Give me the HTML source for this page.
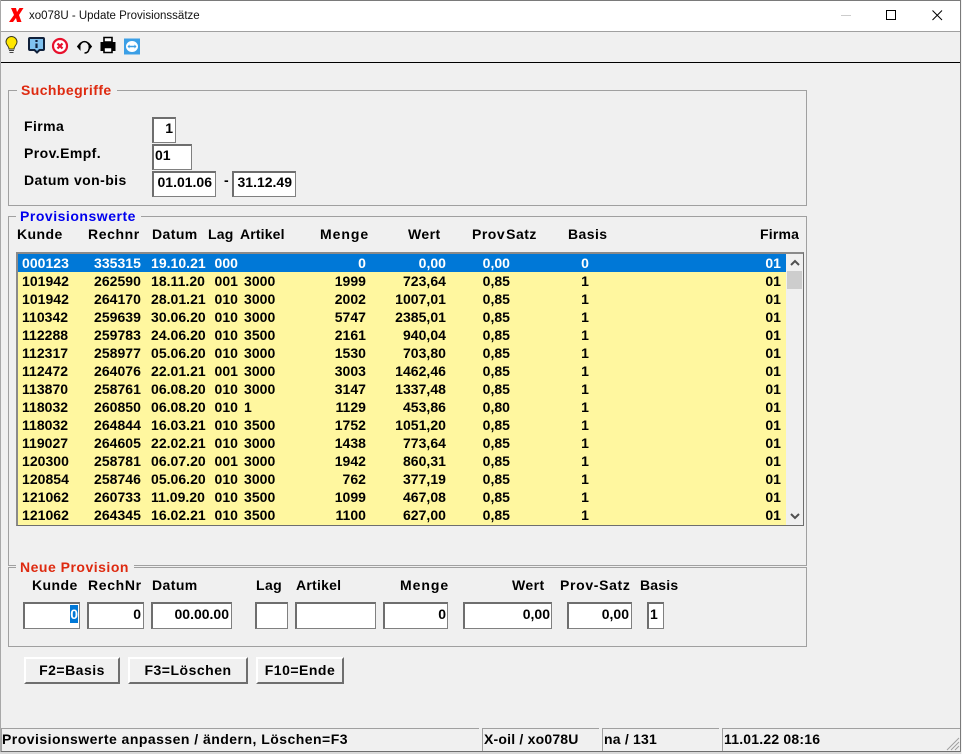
<!DOCTYPE html>
<html><head><meta charset="utf-8">
<style>
html,body{margin:0;padding:0;width:962px;height:754px;overflow:hidden;background:#f0f0f0}
*{box-sizing:border-box}
body{position:relative;font:bold 14px/16px "Liberation Sans",sans-serif;color:#000;letter-spacing:.42px}
.a{position:absolute;white-space:nowrap}
.gb{position:absolute;border:1px solid #a0a0a0}
.lg{position:absolute;background:#f0f0f0;padding:0 5px 0 4px;white-space:nowrap;height:16px}
.in{position:absolute;background:#fff;border-style:solid;border-width:2px 1px 1px 2px;border-color:#6e6e6e #808080 #808080 #6e6e6e;white-space:nowrap;line-height:20px;padding:0 2px 0 2px;height:27px;text-align:right;letter-spacing:0}
.in.l{text-align:left;padding-left:1px}
.btn{position:absolute;top:657px;height:27px;background:#f0f0f0;border:2px solid;border-color:#fff #6e6e6e #6e6e6e #fff;text-align:center;line-height:23px;letter-spacing:.5px}
.row{position:absolute;left:0;width:768px;height:18px;line-height:18px;background:#fff79f;letter-spacing:.03px}
.row.s{background:#0078d7;color:#fff}
.row span{position:absolute;top:0;white-space:nowrap}
.c1{left:4px}.c2{left:76px}.c3{left:133px}.c4{left:196.500px}.c5{left:226px}
.c6{right:420px}.c7{right:340px}.c8{right:276px}.c9{right:197px}.c10{right:5px}
.st{position:absolute;top:728px;height:23px;border-top:1px solid #a0a0a0;border-left:1px solid #a0a0a0;line-height:20px;padding-left:1px;white-space:nowrap;letter-spacing:.2px}
</style></head><body>

<div class="a" style="left:0;top:0;width:961px;height:32px;background:#fff;border-top:1px solid #7a7a7a"></div>
<div class="a" style="left:0;top:31px;width:961px;height:1px;background:#a0a0a0"></div>
<svg class="a" style="left:9px;top:7px" width="15" height="16" viewBox="0 0 15 16"><path d="M2 1H7L8 5 10.500 1H14.500L10 8 12.500 15H8L7 11 4 15H0L5 8Z" fill="#f00"/></svg>
<div class="a" style="left:29px;top:8px;font:11.500px/16px 'Liberation Sans',sans-serif;color:#111;letter-spacing:0">xo078U - Update Provisionssätze</div>
<svg class="a" style="left:830px;top:0" width="132" height="31"><path d="M11 15.500H21" stroke="#ccc"/><rect x="56.500" y="10.500" width="9" height="9" fill="none" stroke="#000"/><path d="M102.500 10.500L112 20M112 10.500L102.500 20" stroke="#000" fill="none"/></svg>

<svg class="a" style="left:0;top:32px" width="150" height="30" viewBox="0 0 150 30">
<path d="M9 17C9 14 6 13 6 10A5.500 5.500 0 0 1 17 10C17 13 14 14 14 17Z" fill="#ffe600" stroke="#3a3a20" stroke-width="1"/><path d="M9 18.500H14M9.500 20.500H13.500" stroke="#444" stroke-width="1"/>
<path d="M30 6H43Q44 6 44 7V17Q44 18 43 18H39.500L37 20.500 34.500 18H30Q29 18 29 17V7Q29 6 30 6Z" fill="#7fc1ee" stroke="#10203a" stroke-width="2"/><path d="M36.500 8V10M36.500 11.500V16" stroke="#10203a" stroke-width="2.200"/>
<circle cx="60" cy="14" r="7" fill="#fff" stroke="#e8112d" stroke-width="2.200"/><path d="M57.500 11.500L62.500 16.500M62.500 11.500L57.500 16.500" stroke="#e8112d" stroke-width="2.200"/>
<path d="M80 13A5 6 0 0 1 89 13" fill="none" stroke="#000" stroke-width="1.500"/><path d="M80 11.500L77.500 14.500 80 17.500ZM89 11.500L91.500 14.500 89 17.500Z" fill="#000" stroke="#000"/><path d="M89 17Q88.500 21 84.500 21" fill="none" stroke="#000" stroke-width="1.500"/>
<path d="M104 5.500H112V10H104Z" fill="#fff" stroke="#000" stroke-width="1.600"/><path d="M101 10.500H115V18.500H112V15H104V18.500H101Z" fill="#000" stroke="#000"/><path d="M104 15.500H112V20.500H104Z" fill="#fff" stroke="#000" stroke-width="1.600"/>
<rect x="124" y="6.500" width="16" height="16" fill="#3b9fe6"/><ellipse cx="132" cy="14.500" rx="6" ry="5.500" fill="#fff"/><path d="M129.500 14.500H134.500" stroke="#3b9fe6" stroke-width="1.500"/><path d="M129.500 12.500L127.500 14.500 129.500 16.500ZM134.500 12.500L136.500 14.500 134.500 16.500Z" fill="#3b9fe6"/>
</svg>
<div class="a" style="left:0;top:62px;width:961px;height:1px;background:#000"></div>

<div class="gb" style="left:8px;top:90px;width:799px;height:116px"></div>
<div class="lg" style="left:17px;top:82px;color:#de2a10">Suchbegriffe</div>
<div class="a" style="left:24px;top:118px">Firma</div>
<div class="a" style="left:24px;top:145px">Prov.Empf.</div>
<div class="a" style="left:24px;top:172px">Datum von-bis</div>
<div class="in" style="left:152px;top:117px;width:24px;height:26px;line-height:19px">1</div>
<div class="in l" style="left:152px;top:144px;width:40px;height:26px;line-height:19px">01</div>
<div class="in" style="left:152px;top:171px;width:64px;height:26px;line-height:18px;padding-right:3px">01.01.06</div>
<div class="a" style="left:224px;top:172px">-</div>
<div class="in" style="left:232px;top:171px;width:64px;height:26px;line-height:18px;padding-right:3px">31.12.49</div>

<div class="gb" style="left:8px;top:216px;width:799px;height:350px"></div>
<div class="lg" style="left:16px;top:208px;color:#0000ee;letter-spacing:.52px">Provisionswerte</div>
<div class="a" style="left:17px;top:226px">Kunde</div>
<div class="a" style="left:88px;top:226px;letter-spacing:.6px">Rechnr</div>
<div class="a" style="left:152px;top:226px">Datum</div>
<div class="a" style="left:208px;top:226px;letter-spacing:.2px">Lag</div>
<div class="a" style="left:240px;top:226px;letter-spacing:.15px">Artikel</div>
<div class="a" style="left:320px;top:226px;letter-spacing:.95px">Menge</div>
<div class="a" style="left:408px;top:226px">Wert</div>
<div class="a" style="left:472px;top:226px;letter-spacing:.5px">Prov<span style="margin-left:1px">Satz</span></div>
<div class="a" style="left:568px;top:226px">Basis</div>
<div class="a" style="left:760px;top:226px;letter-spacing:.2px">Firma</div>

<div class="a" style="left:16px;top:252px;width:788px;height:274px;background:#fff;border:2px solid #8a8a8a;border-right:1px solid #6e6e6e;border-bottom:1px solid #6e6e6e">
<div class="row s" style="top:0"><span class="c1">000123</span><span class="c2">335315</span><span class="c3">19.10.21</span><span class="c4">000</span><span class="c6">0</span><span class="c7">0,00</span><span class="c8">0,00</span><span class="c9">0</span><span class="c10">01</span></div>
<div class="row" style="top:18px"><span class="c1">101942</span><span class="c2">262590</span><span class="c3">18.11.20</span><span class="c4">001</span><span class="c5">3000</span><span class="c6">1999</span><span class="c7">723,64</span><span class="c8">0,85</span><span class="c9">1</span><span class="c10">01</span></div>
<div class="row" style="top:36px"><span class="c1">101942</span><span class="c2">264170</span><span class="c3">28.01.21</span><span class="c4">010</span><span class="c5">3000</span><span class="c6">2002</span><span class="c7">1007,01</span><span class="c8">0,85</span><span class="c9">1</span><span class="c10">01</span></div>
<div class="row" style="top:54px"><span class="c1">110342</span><span class="c2">259639</span><span class="c3">30.06.20</span><span class="c4">010</span><span class="c5">3000</span><span class="c6">5747</span><span class="c7">2385,01</span><span class="c8">0,85</span><span class="c9">1</span><span class="c10">01</span></div>
<div class="row" style="top:72px"><span class="c1">112288</span><span class="c2">259783</span><span class="c3">24.06.20</span><span class="c4">010</span><span class="c5">3500</span><span class="c6">2161</span><span class="c7">940,04</span><span class="c8">0,85</span><span class="c9">1</span><span class="c10">01</span></div>
<div class="row" style="top:90px"><span class="c1">112317</span><span class="c2">258977</span><span class="c3">05.06.20</span><span class="c4">010</span><span class="c5">3000</span><span class="c6">1530</span><span class="c7">703,80</span><span class="c8">0,85</span><span class="c9">1</span><span class="c10">01</span></div>
<div class="row" style="top:108px"><span class="c1">112472</span><span class="c2">264076</span><span class="c3">22.01.21</span><span class="c4">001</span><span class="c5">3000</span><span class="c6">3003</span><span class="c7">1462,46</span><span class="c8">0,85</span><span class="c9">1</span><span class="c10">01</span></div>
<div class="row" style="top:126px"><span class="c1">113870</span><span class="c2">258761</span><span class="c3">06.08.20</span><span class="c4">010</span><span class="c5">3000</span><span class="c6">3147</span><span class="c7">1337,48</span><span class="c8">0,85</span><span class="c9">1</span><span class="c10">01</span></div>
<div class="row" style="top:144px"><span class="c1">118032</span><span class="c2">260850</span><span class="c3">06.08.20</span><span class="c4">010</span><span class="c5">1</span><span class="c6">1129</span><span class="c7">453,86</span><span class="c8">0,80</span><span class="c9">1</span><span class="c10">01</span></div>
<div class="row" style="top:162px"><span class="c1">118032</span><span class="c2">264844</span><span class="c3">16.03.21</span><span class="c4">010</span><span class="c5">3500</span><span class="c6">1752</span><span class="c7">1051,20</span><span class="c8">0,85</span><span class="c9">1</span><span class="c10">01</span></div>
<div class="row" style="top:180px"><span class="c1">119027</span><span class="c2">264605</span><span class="c3">22.02.21</span><span class="c4">010</span><span class="c5">3000</span><span class="c6">1438</span><span class="c7">773,64</span><span class="c8">0,85</span><span class="c9">1</span><span class="c10">01</span></div>
<div class="row" style="top:198px"><span class="c1">120300</span><span class="c2">258781</span><span class="c3">06.07.20</span><span class="c4">001</span><span class="c5">3000</span><span class="c6">1942</span><span class="c7">860,31</span><span class="c8">0,85</span><span class="c9">1</span><span class="c10">01</span></div>
<div class="row" style="top:216px"><span class="c1">120854</span><span class="c2">258746</span><span class="c3">05.06.20</span><span class="c4">010</span><span class="c5">3000</span><span class="c6">762</span><span class="c7">377,19</span><span class="c8">0,85</span><span class="c9">1</span><span class="c10">01</span></div>
<div class="row" style="top:234px"><span class="c1">121062</span><span class="c2">260733</span><span class="c3">11.09.20</span><span class="c4">010</span><span class="c5">3500</span><span class="c6">1099</span><span class="c7">467,08</span><span class="c8">0,85</span><span class="c9">1</span><span class="c10">01</span></div>
<div class="row" style="top:252px;height:19px"><span class="c1">121062</span><span class="c2">264345</span><span class="c3">16.02.21</span><span class="c4">010</span><span class="c5">3500</span><span class="c6">1100</span><span class="c7">627,00</span><span class="c8">0,85</span><span class="c9">1</span><span class="c10">01</span></div>
</div>
<div class="a" style="left:786px;top:254px;width:17px;height:271px;background:#f0f0f0"></div>
<div class="a" style="left:787px;top:271px;width:15px;height:18px;background:#cdcdcd"></div>
<svg class="a" style="left:787px;top:254px" width="16" height="271"><path d="M4 11L8 7 12 11M4 260L8 264 12 260" fill="none" stroke="#505050" stroke-width="2"/></svg>

<div class="gb" style="left:8px;top:567px;width:799px;height:80px"></div>
<div class="lg" style="left:16px;top:559px;color:#de2a10;letter-spacing:.5px">Neue Provision</div>
<div class="a" style="left:32px;top:577px">Kunde</div>
<div class="a" style="left:88px;top:577px;letter-spacing:.65px">RechNr</div>
<div class="a" style="left:152px;top:577px">Datum</div>
<div class="a" style="left:256px;top:577px">Lag</div>
<div class="a" style="left:296px;top:577px;letter-spacing:.25px">Artikel</div>
<div class="a" style="left:400px;top:577px;letter-spacing:.95px">Menge</div>
<div class="a" style="left:512px;top:577px">Wert</div>
<div class="a" style="left:560px;top:577px;letter-spacing:.66px">Prov-Satz</div>
<div class="a" style="left:640px;top:577px;letter-spacing:.2px">Basis</div>

<div class="in" style="left:23px;top:602px;width:57px;padding-right:1px"><span style="background:#0078d7;color:#fff;display:inline-block;height:18px;line-height:18px">0</span></div>
<div class="in" style="left:87px;top:602px;width:57px">0</div>
<div class="in" style="left:151px;top:602px;width:81px">00.00.00</div>
<div class="in" style="left:255px;top:602px;width:33px"></div>
<div class="in" style="left:295px;top:602px;width:81px"></div>
<div class="in" style="left:383px;top:602px;width:65px;padding-right:1px">0</div>
<div class="in" style="left:463px;top:602px;width:89px;padding-right:1px">0,00</div>
<div class="in" style="left:567px;top:602px;width:65px">0,00</div>
<div class="in l" style="left:647px;top:602px;width:17px">1</div>

<div class="btn" style="left:24px;width:96px">F2=Basis</div>
<div class="btn" style="left:128px;width:120px">F3=Löschen</div>
<div class="btn" style="left:256px;width:88px">F10=Ende</div>

<div class="st" style="left:1px;width:478px;padding-left:0;letter-spacing:.47px">Provisionswerte anpassen / ändern, Löschen=F3</div>
<div class="st" style="left:482px;width:117px">X-oil / xo078U</div>
<div class="st" style="left:602px;width:117px">na / 131</div>
<div class="st" style="left:722px;width:238px">11.01.22 08:16</div>
<svg class="a" style="left:946px;top:737px" width="14" height="14"><path d="M13 1L1 13M13 5L5 13M13 9L9 13" stroke="#a0a0a0" fill="none"/></svg>

<div class="a" style="left:0;top:751px;width:961px;height:1px;background:#6e6e6e"></div>
<div class="a" style="left:0;top:752px;width:962px;height:2px;background:#d8d8d8"></div>
<div class="a" style="left:960px;top:0;width:1px;height:752px;background:#7a7a7a"></div>
<div class="a" style="left:961px;top:0;width:1px;height:754px;background:#f4f4f4"></div>
<div class="a" style="left:0;top:0;width:1px;height:752px;background:#a8a8a8"></div>
</body></html>
